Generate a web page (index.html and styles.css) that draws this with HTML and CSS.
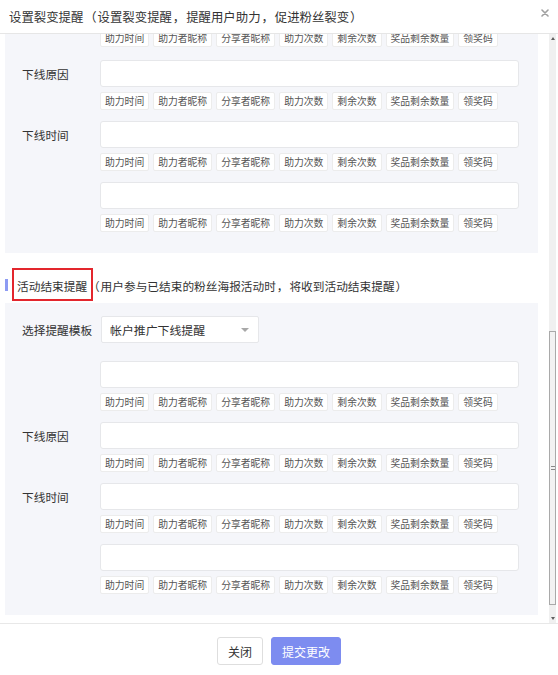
FILE: index.html
```html
<!DOCTYPE html>
<html lang="zh-CN">
<head>
    <meta charset="UTF-8">
    <meta name="viewport" content="width=device-width, initial-scale=1.0">
    <title>设置裂变提醒</title>
    <link rel="stylesheet" href="styles.css">
</head>
<body>
    <div class="dialog">
        <div class="dialog-head">
            <span class="dialog-title">设置裂变提醒<span class="pl">（</span>设置裂变提醒<span class="pr">，</span>提醒用户助力<span class="pr">，</span>促进粉丝裂变<span class="pr">）</span></span>
            <span class="close">
                <svg width="8" height="8" viewBox="0 0 8 8"><path d="M1 1 L7 7 M7 1 L1 7" stroke="#a0a0a0" stroke-width="1.6" stroke-linecap="round"/></svg>
            </span>
        </div>

        <div class="dialog-body">
            <div class="scroll">
                <div class="panel panel-cut">
                    <div class="row row-cut">
                        <div class="label"></div>
                        <div class="field">
                            <div class="tags">
                                <span class="tag">助力时间</span><span class="tag">助力者昵称</span><span class="tag">分享者昵称</span><span class="tag">助力次数</span><span class="tag">剩余次数</span><span class="tag">奖品剩余数量</span><span class="tag">领奖码</span>
                            </div>
                        </div>
                    </div>
                    <div class="row">
                        <div class="label">下线原因</div>
                        <div class="field">
                            <div class="input"></div>
                            <div class="tags">
                                <span class="tag">助力时间</span><span class="tag">助力者昵称</span><span class="tag">分享者昵称</span><span class="tag">助力次数</span><span class="tag">剩余次数</span><span class="tag">奖品剩余数量</span><span class="tag">领奖码</span>
                            </div>
                        </div>
                    </div>
                    <div class="row">
                        <div class="label">下线时间</div>
                        <div class="field">
                            <div class="input"></div>
                            <div class="tags">
                                <span class="tag">助力时间</span><span class="tag">助力者昵称</span><span class="tag">分享者昵称</span><span class="tag">助力次数</span><span class="tag">剩余次数</span><span class="tag">奖品剩余数量</span><span class="tag">领奖码</span>
                            </div>
                        </div>
                    </div>
                    <div class="row">
                        <div class="label"></div>
                        <div class="field">
                            <div class="input"></div>
                            <div class="tags">
                                <span class="tag">助力时间</span><span class="tag">助力者昵称</span><span class="tag">分享者昵称</span><span class="tag">助力次数</span><span class="tag">剩余次数</span><span class="tag">奖品剩余数量</span><span class="tag">领奖码</span>
                            </div>
                        </div>
                    </div>
                </div>

                <div class="sec-title">
                    <span class="bar"></span>
                    <span class="mark">活动结束提醒</span><span><span class="pl">（</span>用户参与已结束的粉丝海报活动时<span class="pr">，</span>将收到活动结束提醒<span class="pr">）</span></span>
                </div>

                <div class="panel">
                    <div class="row row-select">
                        <div class="label">选择提醒模板</div>
                        <div class="select">
                            <span>帐户推广下线提醒</span>
                            <span class="caret"></span>
                        </div>
                    </div>
                    <div class="row">
                        <div class="label"></div>
                        <div class="field">
                            <div class="input"></div>
                            <div class="tags">
                                <span class="tag">助力时间</span><span class="tag">助力者昵称</span><span class="tag">分享者昵称</span><span class="tag">助力次数</span><span class="tag">剩余次数</span><span class="tag">奖品剩余数量</span><span class="tag">领奖码</span>
                            </div>
                        </div>
                    </div>
                    <div class="row">
                        <div class="label">下线原因</div>
                        <div class="field">
                            <div class="input"></div>
                            <div class="tags">
                                <span class="tag">助力时间</span><span class="tag">助力者昵称</span><span class="tag">分享者昵称</span><span class="tag">助力次数</span><span class="tag">剩余次数</span><span class="tag">奖品剩余数量</span><span class="tag">领奖码</span>
                            </div>
                        </div>
                    </div>
                    <div class="row">
                        <div class="label">下线时间</div>
                        <div class="field">
                            <div class="input"></div>
                            <div class="tags">
                                <span class="tag">助力时间</span><span class="tag">助力者昵称</span><span class="tag">分享者昵称</span><span class="tag">助力次数</span><span class="tag">剩余次数</span><span class="tag">奖品剩余数量</span><span class="tag">领奖码</span>
                            </div>
                        </div>
                    </div>
                    <div class="row">
                        <div class="label"></div>
                        <div class="field">
                            <div class="input"></div>
                            <div class="tags">
                                <span class="tag">助力时间</span><span class="tag">助力者昵称</span><span class="tag">分享者昵称</span><span class="tag">助力次数</span><span class="tag">剩余次数</span><span class="tag">奖品剩余数量</span><span class="tag">领奖码</span>
                            </div>
                        </div>
                    </div>
                </div>
            </div>

            <div class="scrollbar">
                <span class="arrow arrow-up"></span>
                <div class="track">
                    <div class="thumb"><span class="grip"></span></div>
                </div>
                <span class="arrow arrow-down"></span>
            </div>
        </div>

        <div class="dialog-foot">
            <button class="btn">关闭</button>
            <button class="btn btn-primary">提交更改</button>
        </div>
    </div>
</body>
</html>
```

FILE: styles.css
```css
body{
    margin: 0;
    background: #fff;
    font-family: "Noto Sans CJK SC", "Noto Sans", sans-serif;
    color: #333;
}
.dialog{
    width: 558px;
    height: 675px;
    display: flex;
    flex-direction: column;
}

/* full-width punctuation, a little wider like the original font */
.pl,
.pr{
    display: inline-block;
    width: 1.15em;
    text-align: center;
}

/* header */
.dialog-head{
    height: 33px;
    border-bottom: 1px solid #e6e6e6;
    display: flex;
    align-items: center;
    justify-content: space-between;
    padding: 0 9px 0 9px;
    flex: none;
}
.dialog-title{
    font-size: 12.4px;
    color: #333;
    line-height: 16px;
    white-space: nowrap;
}
.close{
    display: flex;
    margin-top: -8px;
}

/* body + fake scrollbar */
.dialog-body{
    height: 589px;
    flex: none;
    display: flex;
}
.scroll{
    flex: 1;
    overflow: hidden;
    padding: 0 11px 0 5px;
}
.panel{
    background: #f5f6fa;
    padding: 13px 18px 10px 17px;
}
.panel-cut{
    padding-top: 0;
    margin-top: -5px;
}
.row{
    display: flex;
    align-items: flex-start;
    margin-bottom: 11px;
}
.row-cut{
    margin-bottom: 13px;
}
.row-cut .label{
    height: auto;
}
.row-cut .tags{
    margin-top: 0;
}
.row-select{
    margin-bottom: 18px;
}
.label{
    width: 78px;
    flex: none;
    height: 27px;
    line-height: 27px;
    font-size: 11.7px;
    color: #333;
}
.field{
    width: 419px;
}
.input{
    height: 27px;
    box-sizing: border-box;
    background: #fff;
    border: 1px solid #e6e7ea;
    border-radius: 3px;
}
.tags{
    display: flex;
    gap: 4px;
    margin-top: 5px;
}
.tag{
    height: 18px;
    line-height: 16px;
    box-sizing: border-box;
    padding: 0 4px;
    font-size: 9.8px;
    color: #555;
    background: #fff;
    border: 1px solid #ececec;
    border-radius: 2px;
    white-space: nowrap;
}
.select{
    width: 158px;
    height: 27px;
    box-sizing: border-box;
    margin-left: 1px;
    background: #fff;
    border: 1px solid #e6e7ea;
    border-radius: 2px;
    display: flex;
    align-items: center;
    justify-content: space-between;
    padding: 0 9px 0 8px;
    font-size: 11.9px;
    color: #333;
}
.caret{
    width: 0;
    height: 0;
    border-left: 4px solid transparent;
    border-right: 4px solid transparent;
    border-top: 4px solid #a8a8a8;
}

/* section heading */
.sec-title{
    display: flex;
    align-items: center;
    height: 16px;
    margin: 24px 0 10px;
    font-size: 11.7px;
    color: #333;
    white-space: nowrap;
}
.bar{
    width: 3px;
    height: 12px;
    background: #8d9bf3;
    margin-right: 9px;
}
.mark{
    position: relative;
}
.mark::after{
    content: "";
    position: absolute;
    left: -5px;
    right: -6px;
    top: -9px;
    bottom: -7px;
    border: 2px solid #e3262d;
}

.scrollbar{
    width: 7px;
    margin-right: 2px;
    background: #f0f0f0;
    display: flex;
    flex-direction: column;
    align-items: center;
}
.arrow{
    width: 0;
    height: 0;
    border-left: 2px solid transparent;
    border-right: 2px solid transparent;
    margin: 3px 0;
}
.arrow-up{
    border-bottom: 3px solid #606060;
}
.arrow-down{
    border-top: 3px solid #606060;
}
.track{
    flex: 1;
    width: 100%;
}
.thumb{
    margin-top: 288px;
    height: 274px;
    box-sizing: border-box;
    border: 1px solid #a9a9a9;
    background: #f2f2f2;
    display: flex;
    align-items: center;
    justify-content: center;
}
.grip{
    width: 4px;
    height: 4px;
    border-top: 1px solid #888;
    border-bottom: 1px solid #888;
    box-sizing: border-box;
}

/* footer */
.dialog-foot{
    border-top: 1px solid #e8e8e8;
    display: flex;
    justify-content: center;
    gap: 8px;
    padding-top: 13px;
}
.btn{
    height: 28px;
    padding: 0 10px;
    font-family: "Noto Sans CJK SC", sans-serif;
    font-size: 12px;
    color: #333;
    background: #fff;
    border: 1px solid #dedede;
    border-radius: 3px;
    white-space: nowrap;
    cursor: pointer;
}
.btn-primary{
    color: #fff;
    background: #7d8cf0;
    border-color: #7d8cf0;
}
```
